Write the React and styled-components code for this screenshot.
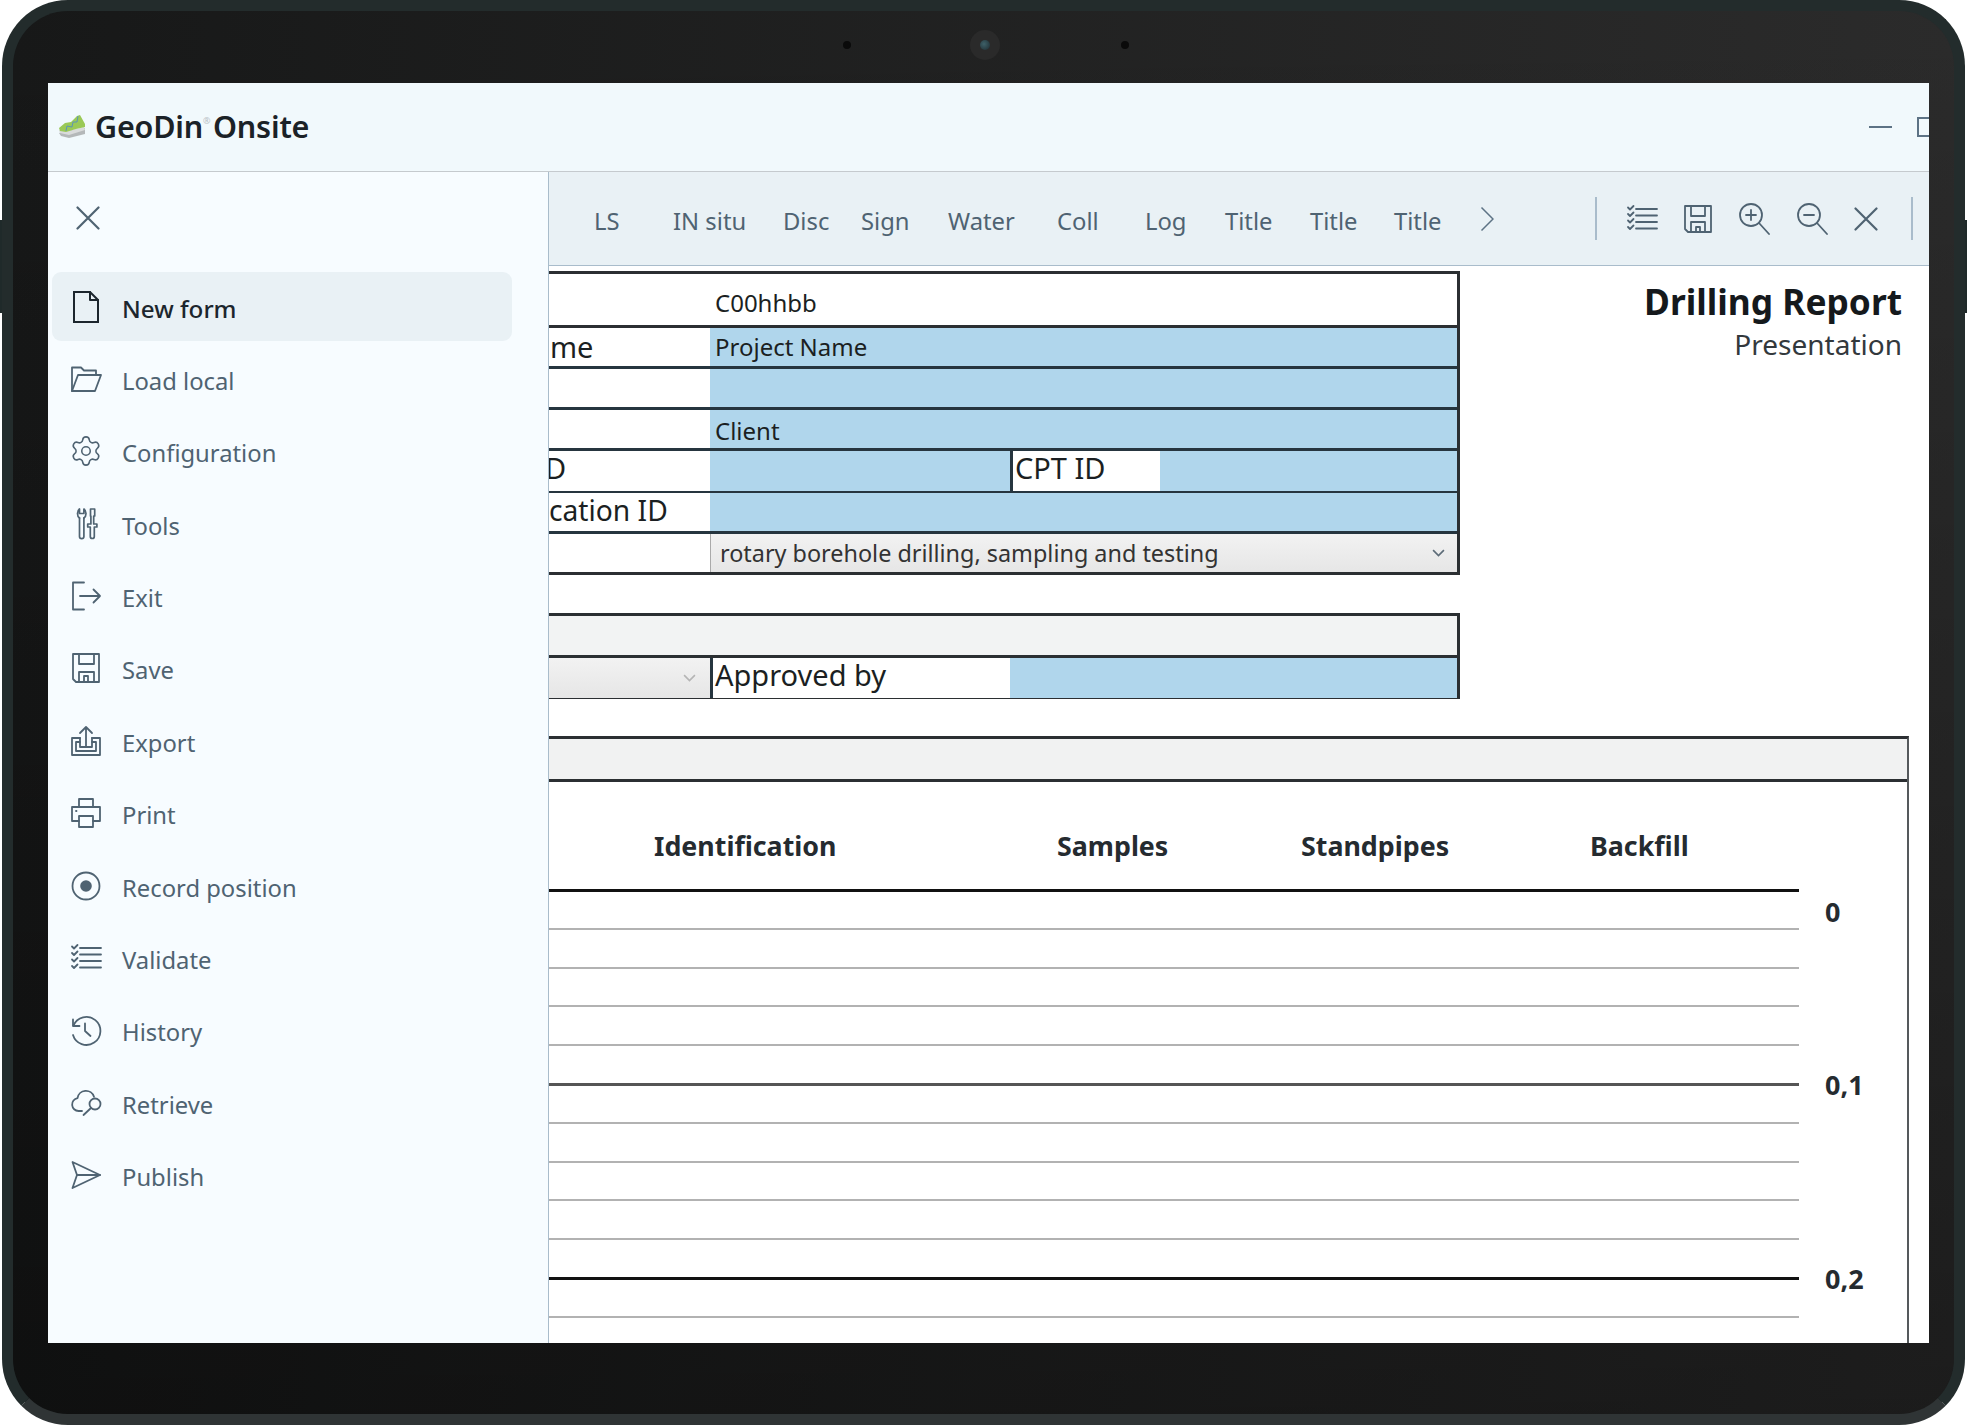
import React from "react";
import styled, { createGlobalStyle } from "styled-components";
import { Settings } from "lucide-react";

const Global = createGlobalStyle`
  html, body { margin: 0; padding: 0; background: #fff; }
  body { font-family: "Noto Sans", "Open Sans", sans-serif; width: 1968px; height: 1426px; overflow: hidden; }
  * { box-sizing: border-box; }
`;

const Device = styled.div`
  position: relative;
  margin-left: 2px;
  width: 1963px;
  height: 1425px;
  border: 11px solid #232c2c;
  border-bottom-color: #2f3435;
  border-radius: 66px;
  background: linear-gradient(180deg, rgba(0,0,0,0) 0%, rgba(0,0,0,.35) 100%), linear-gradient(90deg, #171818, #2b2b2b);
  padding: 0 25px 71px 35px;
  &::before, &::after {
    content: "";
    position: absolute;
    top: 209px;
    width: 2px;
    height: 93px;
    background: #1f2a2a;
  }
  &::before { left: -13px; }
  &::after { right: -13px; }
`;
const CameraBar = styled.div`
  height: 72px;
  padding-top: 34px;
  display: flex;
  justify-content: center;
  align-items: flex-start;
  margin-left: -6px;
`;
const Sensor = styled.span`
  width: 8px;
  height: 8px;
  margin-top: -4px;
  border-radius: 50%;
  background: #0a0a0a;
`;
const Lens = styled.span`
  width: 30px;
  height: 30px;
  margin: -15px 121px 0 119px;
  border-radius: 50%;
  background: #2a2a2a;
  display: flex;
  align-items: center;
  justify-content: center;
  &::after {
    content: "";
    width: 10px;
    height: 10px;
    border-radius: 50%;
    background: radial-gradient(circle at 40% 40%, #3e6068, #1d2b30);
  }
`;
const Screen = styled.div`
  width: 1881px;
  height: 1260px;
  display: flex;
  flex-direction: column;
  overflow: hidden;
  background: #fff;
`;
const TitleBar = styled.header`
  height: 89px;
  flex: none;
  display: flex;
  align-items: center;
  padding-left: 10px;
  background: #f1f9fc;
  border-bottom: 1px solid #c5cace;
  overflow: hidden;
`;
const Brand = styled.div`
  display: flex;
  align-items: center;
  gap: 9px;
  flex: 1;
`;
const AppName = styled.h1`
  margin: 0;
  font-size: 30.5px;
  font-weight: 600;
  letter-spacing: -0.2px;
  word-spacing: -5px;
  color: #1b2227;
  line-height: 1.3;
  white-space: nowrap;
`;
const Registered = styled.sup`
  font-size: 9px;
  font-weight: 400;
  color: #b9c0c4;
  margin: 0;
  vertical-align: 14px;
  line-height: 0;
`;
const Minimize = styled.span`
  width: 23px;
  height: 2px;
  background: #5d7385;
  margin-right: 25px;
`;
const Maximize = styled.span`
  width: 20px;
  height: 20px;
  margin-right: -8px;
  border: 2px solid #5d7385;
`;
const Body = styled.div`
  flex: 1;
  min-height: 0;
  display: flex;
`;
const Sidebar = styled.nav`
  width: 501px;
  flex: none;
  background: #f7fcff;
  border-right: 1px solid #a9bccb;
  padding: 0 36px 0 4px;
`;
const CloseRow = styled.div`
  height: 100px;
  display: flex;
  align-items: center;
  padding: 0 0 8px 24px;
  color: #4f6372;
`;
const MenuList = styled.ul`
  list-style: none;
  margin: 0;
  padding: 0;
  display: flex;
  flex-direction: column;
  gap: 3.4px;
`;
const MenuItem = styled.li`
  height: 69px;
  display: flex;
  align-items: center;
  gap: 20px;
  padding-left: 18px;
  border-radius: 9px;
  background: ${p => (p.$active ? "#e9f1f5" : "transparent")};
  color: ${p => (p.$active ? "#1c262d" : "#4f6372")};
  font-size: ${p => (p.$active ? 24.2 : 23.8)}px;
  font-weight: ${p => (p.$active ? 500 : 400)};
  svg { flex: none; }
`;
const MenuLabel = styled.span`
  position: relative;
  top: 2px;
  white-space: nowrap;
`;
const GearIcon = styled(Settings)`
  margin: -1px;
`;
const Main = styled.main`
  flex: 1;
  min-width: 0;
  display: flex;
  flex-direction: column;
`;
const Toolbar = styled.div`
  height: 94px;
  flex: none;
  display: flex;
  align-items: center;
  padding-left: 45px;
  background: #e9f1f5;
  border-bottom: 1px solid #a9bccb;
  color: #4f6372;
`;
const Tab = styled.span`
  width: ${p => p.$w}px;
  flex: none;
  font-size: 23.8px;
  white-space: nowrap;
  position: relative;
  top: 2px;
`;
const ToolGroup = styled.div`
  margin-left: auto;
  margin-right: 16px;
  height: 43px;
  display: flex;
  align-items: center;
  gap: 26px;
  padding: 0 33px 0 29px;
  border-left: 2px solid #a9bccb;
  border-right: 2px solid #a9bccb;
`;
const Sheet = styled.div`
  flex: 1;
  min-height: 0;
  display: flex;
  flex-direction: column;
  padding-top: 5px;
  overflow: hidden;
  color: #1b1f22;
`;
const TopArea = styled.div`
  display: flex;
`;
const Forms = styled.div`
  width: 911px;
  flex: none;
`;
const ReportTitle = styled.div`
  flex: 1;
  text-align: right;
  padding: 7px 27px 0 0;
`;
const ReportHeading = styled.h2`
  margin: 0;
  font-size: 35.3px;
  font-weight: 700;
  line-height: 46px;
  color: #15191c;
  white-space: nowrap;
`;
const ReportSub = styled.div`
  font-size: 28px;
  line-height: 40px;
  color: #33393d;
`;
const Table = styled.div`
  border-top: 3px solid #2b2f32;
  border-right: 3px solid #2b2f32;
  margin-top: ${p => p.$top || 0}px;
`;
const Row = styled.div`
  display: grid;
  grid-template-columns: ${p => p.$cols || "161px 1fr"};
  height: ${p => p.$h || 41}px;
  border-bottom: 3px solid ${p => p.$line || "#26353f"};
`;
const Cell = styled.div`
  display: flex;
  align-items: center;
  padding: ${p => p.$pt || 0}px 0 ${p => p.$pb || 0}px ${p => p.$pad ?? 5}px;
  font-size: ${p => p.$size || 25}px;
  line-height: 1.2;
  white-space: nowrap;
  border-left: ${p => (p.$ruled ? "3px solid #26353f" : "none")};
  background: ${p => (p.$blue ? "#b0d6ec" : p.$grey ? "#f2f3f3" : "#fff")};
`;
const SelectCell = styled.div`
  display: flex;
  align-items: center;
  justify-content: ${p => (p.$bare ? "flex-end" : "space-between")};
  padding: 0 ${p => (p.$bare ? 14 : 12)}px 0 9px;
  font-size: 23.4px;
  white-space: nowrap;
  color: #333;
  background: linear-gradient(180deg, #f2f2f2, #e6e6e6);
  border-left: ${p => (p.$bare ? "none" : "1px solid #aaa")};
`;
const ClippedLetter = styled.span`
  margin-left: -4px;
`;
const DepthTable = styled.div`
  flex: 1;
  min-height: 0;
  width: 1360px;
  margin-top: 37px;
  border-top: 3px solid #2b2f32;
  border-right: 2px solid #55595c;
  overflow: hidden;
`;
const GreyBand = styled.div`
  height: 43px;
  background: #f1f2f2;
  border-bottom: 3px solid #2b2f32;
`;
const ColumnHeads = styled.div`
  height: 107px;
  display: grid;
  grid-template-columns: 403px 244px 289px 1fr;
  align-items: center;
  padding: 19px 0 0 105px;
`;
const ColumnHead = styled.div`
  font-size: 26.8px;
  font-weight: 700;
  color: #252b30;
  white-space: nowrap;
`;
const TickRow = styled.div`
  display: flex;
  align-items: flex-start;
  height: 38.8px;
`;
const Rule = styled.div`
  width: 1250px;
  flex: none;
  border-top: ${p => (p.$kind === "major" ? "3px solid #111" : p.$kind === "mid" ? "3px solid #555" : "2px solid #b2b2b2")};
`;
const DepthLabel = styled.div`
  margin-left: 26px;
  margin-top: ${p => p.$mt}px;
  font-size: 27px;
  font-weight: 700;
  line-height: 30px;
  color: #252b30;
`;

const Ico = ({ w = 32, h = 32, sw = 1.8, children }) => (
  <svg width={w} height={h} viewBox={`0 0 ${w} ${h}`} fill="none" stroke="currentColor" strokeWidth={sw} strokeLinejoin="round" strokeLinecap="round">
    {children}
  </svg>
);
const CloseIcon = () => <Ico w={24} h={24} sw={2.2}><path d="M1.5 1.5l21 21M22.5 1.5l-21 21" /></Ico>;
const icons = {
  file: <Ico sw={2}><path d="M4 1h16l8 8v22H4z" strokeLinejoin="miter" /><path d="M20 1v8h8" /></Ico>,
  folder: <Ico><path d="M2 28V4.5h9l3 3h12V12" /><path d="M2 28l6-16h23l-6 16z" /></Ico>,
  gear: <GearIcon size={34} strokeWidth={1.1} />,
  tools: <Ico sw={1.7}><path d="M9.500 10v18.500a2.200 2.200 0 0 0 4.400 0V10" /><path d="M9.500 10C8 9 7.500 7 7.500 5.500 7.500 3.500 8 2 9.500 1v4.500h4.400V1C15.400 2 16 3.500 16 5.500 16 7 15.400 9 13.900 10" /><path d="M20.500 1h4.200v7h-1v8h3.200v3h-2.600v9.500a2 2 0 0 1-4 0V19h-2.600v-3h3.200V8h-.4z" /></Ico>,
  exit: <Ico><path d="M14 2.500H3v27h11" /><path d="M10 16h20M23.500 9.500L30 16l-6.500 6.500" /></Ico>,
  save: <Ico><path d="M3 2h26v28H6l-3-3z" /><path d="M9 2v10h15V2" /><path d="M9 30V20h15v10" /><path d="M14 30v-6h4v6" /></Ico>,
  export: <Ico><path d="M10 13H2v17h28V13h-8" /><path d="M10 17H6v9h20v-9h-4" /><path d="M16 22V2M10 8l6-6 6 6" /><path d="M10 13v9h12v-9" /></Ico>,
  print: <Ico><path d="M9 10V2h14v8" /><path d="M9 24H2V10h28v14h-7" /><path d="M9 19h14v11H9z" /><path d="M6 14h.5" /></Ico>,
  record: <Ico><circle cx="16" cy="16" r="13.500" /><circle cx="16" cy="16" r="5.800" fill="currentColor" stroke="none" /></Ico>,
  validate: <Ico sw={1.8}><path d="M10 6h21M10 12.500h21M10 19h21M10 25.500h21" /><path d="M2 4.500l2 2 3.500-3.500M2 11l2 2 3.500-3.500M2 17.500l2 2 3.500-3.500M2 24l2 2 3.500-3.500" /></Ico>,
  history: <Ico><path d="M3 5.500v6.500h6.500" /><path d="M3.500 11.500A14 14 0 1 1 3 21" /><path d="M15 9.500V17l5.500 5" /></Ico>,
  retrieve: <Ico><path d="M12 24H8.500a6.500 6.500 0 0 1-1-12.900A8.500 8.500 0 0 1 24 9.800" /><circle cx="25" cy="17" r="5.500" /><path d="M21 21l-7.500 7" /></Ico>,
  publish: <Ico><path d="M2.500 3L30 16 2.500 29l4.500-13z" /><path d="M7 16h23" /></Ico>,
};

const menu = [
  ["file", "New form", true], ["folder", "Load local"], ["gear", "Configuration"], ["tools", "Tools"],
  ["exit", "Exit"], ["save", "Save"], ["export", "Export"], ["print", "Print"],
  ["record", "Record position"], ["validate", "Validate"], ["history", "History"], ["retrieve", "Retrieve"], ["publish", "Publish"],
];
const tabs = [["LS", 79], ["IN situ", 110], ["Disc", 78], ["Sign", 87], ["Water", 109], ["Coll", 88], ["Log", 80], ["Title", 85], ["Title", 84], ["Title", 86]];
const ticks = ["major", "minor", "minor", "minor", "minor", "mid", "minor", "minor", "minor", "minor", "major", "minor"];
const depths = { 0: ["0", 8], 5: ["0,1", -13], 10: ["0,2", -13] };

const Chevron = ({ color = "#5d6c78", w = 13 }) => (
  <svg width={w} height={w * 0.6} viewBox="0 0 12 7" fill="none" stroke={color} strokeWidth="1.500"><path d="M1 1l5 5 5-5" /></svg>
);
const Logo = () => (
  <svg width="28" height="23" viewBox="0 0 28 23">
    <path d="M1 18l2 3 8 2 16-4v-6L9 16z" fill="#b4b8b9" />
    <path d="M1 15l1 3 9 2 16-5-1-3-15 4z" fill="#d9dbdb" />
    <path d="M1 13l6-5 6-1 6-6 3-1 5 9 0 3-9 2-10 3-6-1z" fill="#9ac956" />
    <path d="M8 16l1-5 5 1 1-5 4 0 1-6" fill="none" stroke="#5c94b8" strokeWidth="1" />
  </svg>
);

export default function App() {
  return (
    <>
      <Global />
      <Device>
        <CameraBar>
          <Sensor /><Lens /><Sensor />
        </CameraBar>
        <Screen>
          <TitleBar>
            <Brand>
              <Logo />
              <AppName>GeoDin<Registered>®</Registered> Onsite</AppName>
            </Brand>
            <Minimize />
            <Maximize />
          </TitleBar>
          <Body>
            <Sidebar>
              <CloseRow><CloseIcon /></CloseRow>
              <MenuList>
                {menu.map(([icon, label, active]) => (
                  <MenuItem key={label} $active={active}>
                    {icons[icon]}
                    <MenuLabel>{label}</MenuLabel>
                  </MenuItem>
                ))}
              </MenuList>
            </Sidebar>
            <Main>
              <Toolbar>
                {tabs.map(([t, w], i) => <Tab key={i} $w={w}>{t}</Tab>)}
                <svg width="14" height="26" viewBox="0 0 14 26" fill="none" stroke="#5d7385" strokeWidth="1.500"><path d="M1.500 1.500L13 13 1.500 24.500" /></svg>
                <ToolGroup>
                  {icons.validate}
                  <Ico w={28} h={28}><path d="M1 1h26v26H4l-3-3z" /><path d="M7 1v10h14V1" /><path d="M7 27V17h14v10" /><path d="M12 27v-5h4v5" /></Ico>
                  <Ico><circle cx="13" cy="12" r="11" /><path d="M21 20l10 11M13 7v10M8 12h10" /></Ico>
                  <Ico><circle cx="13" cy="12" r="11" /><path d="M21 20l10 11M8 12h10" /></Ico>
                  <CloseIcon />
                </ToolGroup>
              </Toolbar>
              <Sheet>
                <TopArea>
                  <Forms>
                    <Table>
                      <Row $h={54} $line="#2b2f32"><Cell /><Cell $size={24} $pt={7}>C00hhbb</Cell></Row>
                      <Row $h={41}><Cell $pad={1} $size={29}>me</Cell><Cell $blue $size={24} $pt={1}>Project Name</Cell></Row>
                      <Row><Cell /><Cell $blue /></Row>
                      <Row><Cell /><Cell $blue $size={24} $pt={5}>Client</Cell></Row>
                      <Row $h={42} $cols="161px 300px 150px 1fr"><Cell $pad={0} $size={29} $pb={5}><ClippedLetter>D</ClippedLetter></Cell><Cell $blue /><Cell $ruled $pad={2} $size={29} $pb={5}>CPT ID</Cell><Cell $blue /></Row>
                      <Row><Cell $pad={0} $size={28.2} $pb={2}>cation ID</Cell><Cell $blue /></Row>
                      <Row $line="#2b2f32"><Cell /><SelectCell>rotary borehole drilling, sampling and testing<Chevron /></SelectCell></Row>
                    </Table>
                    <Table $top={38}>
                      <Row $h={42} $cols="1fr" $line="#2b2f32"><Cell $grey /></Row>
                      <Row $line="#2b2f32" $cols="161px 300px 1fr"><SelectCell $bare><Chevron color="#b5b5b5" /></SelectCell><Cell $ruled $size={29} $pad={2} $pb={5}>Approved by</Cell><Cell $blue /></Row>
                    </Table>
                  </Forms>
                  <ReportTitle>
                    <ReportHeading>Drilling Report</ReportHeading>
                    <ReportSub>Presentation</ReportSub>
                  </ReportTitle>
                </TopArea>
                <DepthTable>
                  <GreyBand />
                  <ColumnHeads>
                    <ColumnHead>Identification</ColumnHead>
                    <ColumnHead>Samples</ColumnHead>
                    <ColumnHead>Standpipes</ColumnHead>
                    <ColumnHead>Backfill</ColumnHead>
                  </ColumnHeads>
                  {ticks.map((k, i) => (
                    <TickRow key={i}>
                      <Rule $kind={k} />
                      {depths[i] && <DepthLabel $mt={depths[i][1]}>{depths[i][0]}</DepthLabel>}
                    </TickRow>
                  ))}
                </DepthTable>
              </Sheet>
            </Main>
          </Body>
        </Screen>
      </Device>
    </>
  );
}
